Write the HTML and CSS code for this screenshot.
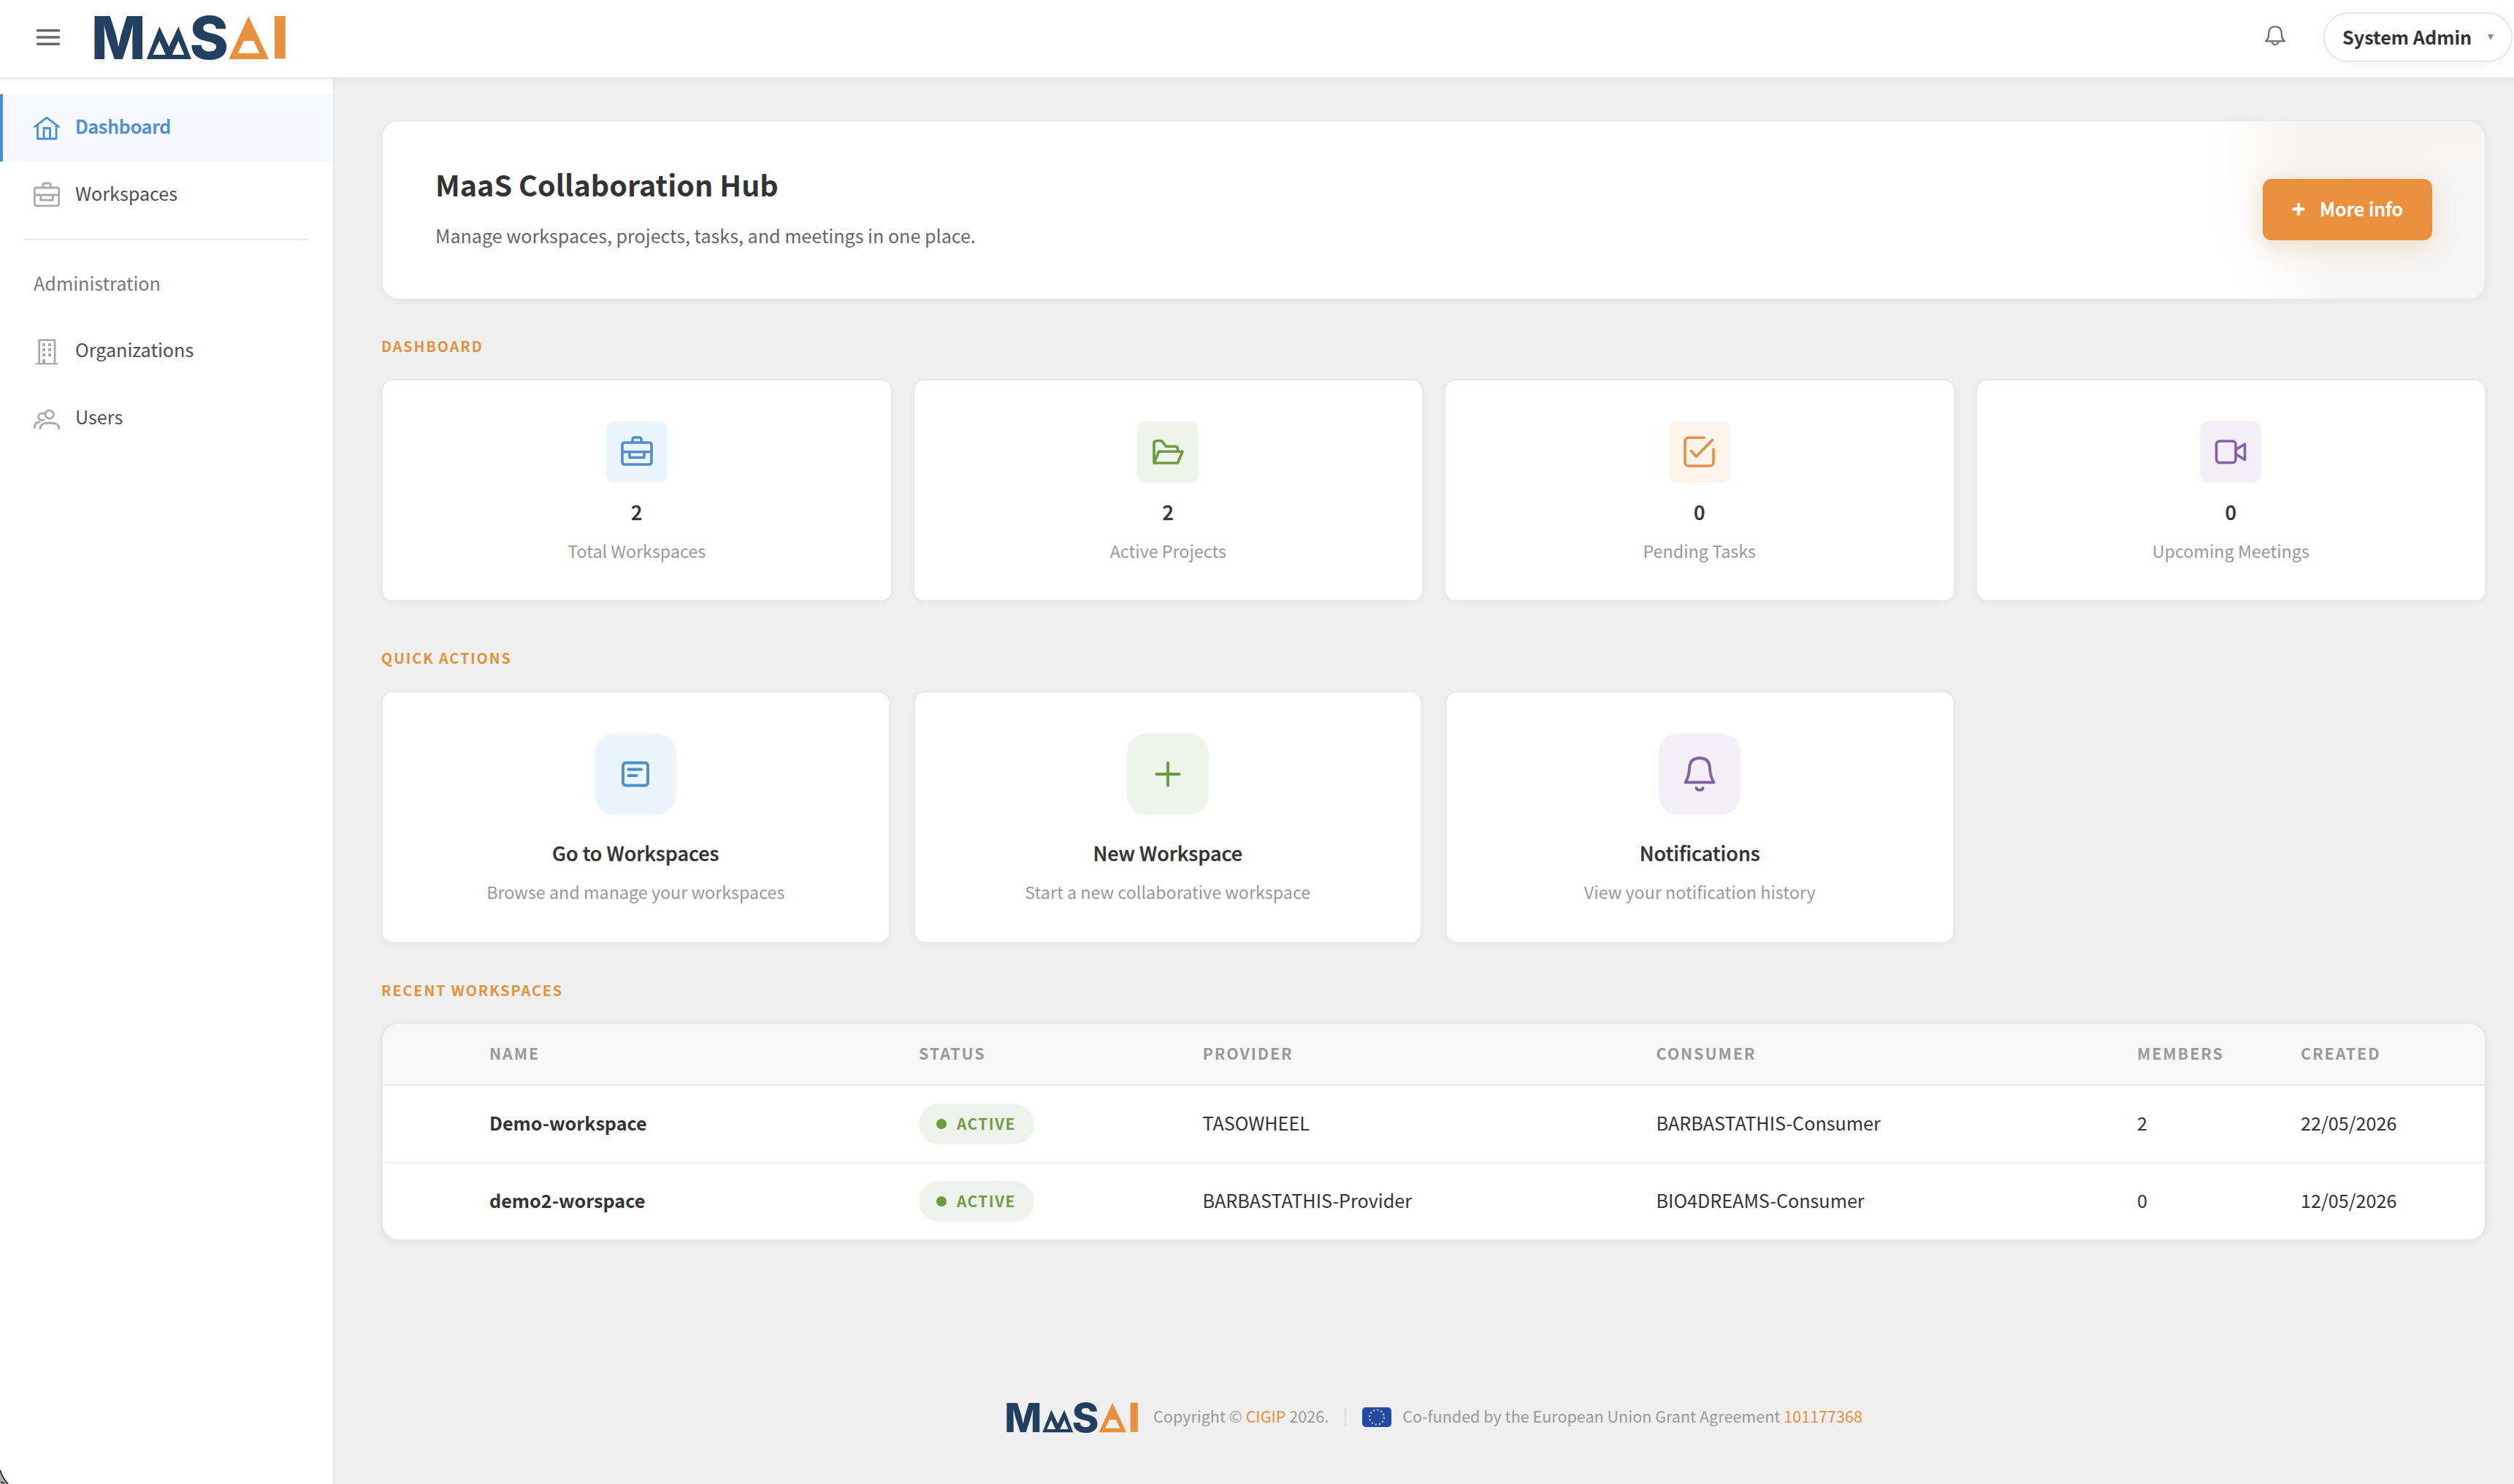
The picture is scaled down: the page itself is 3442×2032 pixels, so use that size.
FILE: index.html
```html
<!DOCTYPE html>
<html lang="en">
<head>
<meta charset="utf-8">
<title>MaaSAI – Collaboration Hub</title>
<link rel="stylesheet" href="styles.css">
</head>
<body>
<header class="topbar">
  <svg class="burger" width="34" height="24" viewBox="0 0 34 24"><path d="M2.500 2.700h29M2.500 12h29M2.500 21.300h29"/></svg>
  <svg class="logo" width="262" height="60" viewBox="0 0 262 60">
    <text class="logo-letter" x="-4" y="60" textLength="74.500" lengthAdjust="spacingAndGlyphs">M</text>
    <path fill="#233f60" fill-rule="evenodd" d="M71.700 60 89.300 15.300 102.300 43 115.300 15.300 133 60ZM80.300 54H97.700L89.300 35ZM106.700 54H123.300L115.300 35Z"/>
    <text class="logo-letter" x="130.600" y="60">S</text>
    <path fill="#e8903e" fill-rule="evenodd" d="M184.300 60 211.300 1 239 60ZM205 35H218.300L226.300 52H196.700Z"/>
    <rect fill="#e8903e" x="247" y="1" width="14.800" height="58.400"/>
  </svg>
  <svg class="bell" width="28" height="28" viewBox="0 0 28 28"><path d="M1 21.300C4.500 19 5 16 5.200 10.500 5.300 4 9 1.300 14 1.300S22.700 4 22.800 10.500C23 16 23.500 19 27 21.300ZM9.500 21.500a4.500 4.500 0 0 0 9 0"/></svg>
  <button class="user"><span>System Admin</span><i class="caret"></i></button>
</header>

<div class="body">
  <nav class="sidebar">
    <a class="item active">
      <svg width="36" height="36" viewBox="0 0 36 36"><path d="M1.500 16.500 18 4.200 34.500 16.500M5.500 14V33H31V14M14 33V18.500H22.500V33"/></svg>
      <span>Dashboard</span>
    </a>
    <a class="item">
      <svg width="36" height="36" viewBox="0 0 36 36"><rect x="1.300" y="8" width="33.400" height="24.800" rx="2.500"/><path d="M12.800 8V4.500a2.500 2.500 0 0 1 2.500-2.500h5.600a2.500 2.500 0 0 1 2.500 2.500V8M1.300 18H34.700M9.700 18v7H26.300V18"/></svg>
      <span>Workspaces</span>
    </a>
    <hr>
    <div class="group">Administration</div>
    <a class="item">
      <svg width="36" height="36" viewBox="0 0 36 36"><path d="M7.700 35V2.600H29V35M4 35.400H32"/><path class="solid" d="M12 7h4v4h-4zM20 7h4v4h-4zM12 14h4v4h-4zM20 14h4v4h-4zM12 21h4v4h-4zM20 21h4v4h-4zM12 29h4v6h-4z"/></svg>
      <span>Organizations</span>
    </a>
    <a class="item">
      <svg width="36" height="36" viewBox="0 0 36 36"><circle cx="21.700" cy="12.500" r="5.700"/><path d="M9.200 32C9.200 26 13 24 21.700 24S34.700 26 34.700 32M13.800 11C8.500 10.300 6.500 13.500 6.500 15.700 6.500 19 10 21.500 13.800 20M1.300 30.800C1.300 26 3 23 8 23"/></svg>
      <span>Users</span>
    </a>
  </nav>

  <main>
    <section class="hero">
      <div class="hero-text">
        <h1>MaaS Collaboration Hub</h1>
        <p>Manage workspaces, projects, tasks, and meetings in one place.</p>
      </div>
      <button class="cta"><b>+</b><span>More info</span></button>
    </section>

    <h2>Dashboard</h2>
    <div class="stats">
      <article class="card">
        <div class="tile blue"><svg width="44" height="44" viewBox="0 0 44 44"><rect x="2" y="9" width="40" height="30" rx="3"/><path d="M16 9V4.500A2.500 2.500 0 0 1 18.500 2h7A2.500 2.500 0 0 1 28 4.500V9M2 21.700H42M12 21.700V29.500H32V21.700"/></svg></div>
        <strong>2</strong><p>Total Workspaces</p>
      </article>
      <article class="card">
        <div class="tile green"><svg width="44" height="44" viewBox="0 0 44 44"><path d="M3 37V10.500Q3 6.500 7 6.500H11Q13.500 6.500 15 8.300L19.500 14.300H32Q35.500 14.300 35.500 17.500V21M3 37 9.500 21.300H42L35.500 37Z"/></svg></div>
        <strong>2</strong><p>Active Projects</p>
      </article>
      <article class="card">
        <div class="tile orange"><svg width="44" height="44" viewBox="0 0 44 44"><path d="M28 2.200H7a5 5 0 0 0-5 5V36a5 5 0 0 0 5 5H36a5 5 0 0 0 5-5V18M10.500 20.500 17.500 28 39.500 5.500"/></svg></div>
        <strong>0</strong><p>Pending Tasks</p>
      </article>
      <article class="card">
        <div class="tile purple"><svg width="44" height="44" viewBox="0 0 44 44"><rect x="2.500" y="7" width="26.500" height="29.500" rx="4.500"/><path d="M29.500 18.500 41.500 11V32.500L29.500 25"/></svg></div>
        <strong>0</strong><p>Upcoming Meetings</p>
      </article>
    </div>

    <h2 class="h-quick">Quick Actions</h2>
    <div class="actions">
      <article class="card">
        <div class="tile blue"><svg width="48" height="48" viewBox="0 0 48 48"><rect x="7" y="8.500" width="34" height="31" rx="4"/><path d="M14.500 17.500H32M14.500 26H25.500"/></svg></div>
        <h3>Go to Workspaces</h3><p>Browse and manage your workspaces</p>
      </article>
      <article class="card">
        <div class="tile green"><svg width="48" height="48" viewBox="0 0 48 48"><path d="M24 8.500V39.500M8.500 24H39.500"/></svg></div>
        <h3>New Workspace</h3><p>Start a new collaborative workspace</p>
      </article>
      <article class="card">
        <div class="tile purple"><svg width="48" height="48" viewBox="0 0 48 48"><path d="M4.500 35.300C8.500 29 9.900 22 10.200 14.500 10.900 6 16 2 24 2S37.100 6 37.800 14.500C38.100 22 39.500 29 43.500 35.300ZM19.500 43C20.500 46.800 27.500 46.800 28.500 43"/></svg></div>
        <h3>Notifications</h3><p>View your notification history</p>
      </article>
    </div>

    <h2 class="h-recent">Recent Workspaces</h2>
    <div class="table-card">
      <table>
        <colgroup><col class="c0"><col class="c1"><col class="c2"><col class="c3"><col class="c4"><col class="c5"><col></colgroup>
        <thead>
          <tr><th></th><th>Name</th><th class="th-status">Status</th><th>Provider</th><th>Consumer</th><th>Members</th><th>Created</th></tr>
        </thead>
        <tbody>
          <tr><td></td><td class="name">Demo-workspace</td><td><span class="badge"><i></i>Active</span></td><td>TASOWHEEL</td><td>BARBASTATHIS-Consumer</td><td>2</td><td>22/05/2026</td></tr>
          <tr><td></td><td class="name">demo2-worspace</td><td><span class="badge"><i></i>Active</span></td><td>BARBASTATHIS-Provider</td><td>BIO4DREAMS-Consumer</td><td>0</td><td>12/05/2026</td></tr>
        </tbody>
      </table>
    </div>

    <footer>
      <svg class="foot-logo" width="180" height="41.200" viewBox="0 0 262 60">
        <text class="logo-letter" x="-4" y="60" textLength="74.500" lengthAdjust="spacingAndGlyphs">M</text>
        <path fill="#233f60" fill-rule="evenodd" d="M71.700 60 89.300 15.300 102.300 43 115.300 15.300 133 60ZM80.300 54H97.700L89.300 35ZM106.700 54H123.300L115.300 35Z"/>
        <text class="logo-letter" x="130.600" y="60">S</text>
        <path fill="#e8903e" fill-rule="evenodd" d="M184.300 60 211.300 1 239 60ZM205 35H218.300L226.300 52H196.700Z"/>
        <rect fill="#e8903e" x="247" y="1" width="14.800" height="58.400"/>
      </svg>
      <span class="copy">Copyright © <a>CIGIP</a> 2026.</span>
      <i class="sep"></i>
      <svg class="flag" width="40" height="27" viewBox="0 0 40 27"><rect width="40" height="27" rx="5" fill="#2049a8"/><circle cx="20" cy="13.500" r="10" fill="none" stroke="#e6d25a" stroke-width="2.200" stroke-dasharray="2.200 3.036"/></svg>
      <span>Co-funded by the European Union Grant Agreement <a>101177368</a></span>
    </footer>
  </main>
</div>
<svg class="corner" width="12" height="20" viewBox="0 0 12 20"><path d="M0 2Q3 12 11 20H0Z" fill="#b4b4b4"/><path d="M0 1Q3 11 11 20M1 17l5 2" fill="none" stroke="#222" stroke-width="1.800"/></svg>
</body>
</html>
```
FILE: styles.css
```css
* { box-sizing: border-box; }
body {
  margin: 0;
  height: 2032px;
  background: #efefef;
  color: #333;
  font: 400 25.16px/36px "Noto Sans CJK SC", "Noto Sans", sans-serif;
}
h1, h2, h3, p { margin: 0; }
svg { display: block; flex: none; fill: none; }
.logo-letter { font: 800 81px Inter, sans-serif; fill: #233f60; }

.topbar {
  position: relative;
  z-index: 1;
  display: flex;
  align-items: center;
  height: 108px;
  padding: 0 2px 4px 49px;
  background: #fff;
  border-bottom: 2px solid #e8e8e8;
  box-shadow: 0 2px 12px rgba(0, 0, 0, .05);
}
.burger { stroke: #666; stroke-width: 3.4; stroke-linecap: round; }
.logo { margin-left: 46px; overflow: visible; }
.bell { margin: 0 52px 5px auto; stroke: #6c6c72; stroke-width: 2.2; stroke-linejoin: round; }
.user {
  display: flex;
  align-items: center;
  width: 259px;
  height: 68px;
  padding: 0 0 3px 24px;
  border: 2px solid #e6e6e6;
  border-radius: 34px;
  background: #fff;
  box-shadow: 0 4px 16px rgba(0, 0, 0, .05);
  color: #333;
  font: 700 25.2px/36px "Noto Sans CJK SC", sans-serif;
}
.caret {
  margin: 3px 0 0 22px;
  border: 4px solid transparent;
  border-top: 8px solid #8c8c8c;
  border-bottom: 0;
}

.body { display: flex; height: 1924px; }
.sidebar {
  flex: none;
  width: 458px;
  padding-top: 21px;
  background: #fff;
  border-right: 2px solid #e6e6e6;
}
.item {
  display: flex;
  align-items: center;
  gap: 20px;
  height: 92px;
  padding-left: 46px;
  color: #4d4f53;
}
.item span { padding: 0 0 6px 1px; }
.item svg { stroke: #a9aaae; stroke-width: 2.8; stroke-linecap: round; stroke-linejoin: round; }
.item .solid { fill: #a9aaae; stroke: none; }
.item.active {
  padding-left: 42px;
  border-left: 4px solid #4a8fd4;
  background: #f5f9ff;
  color: #4f8ecb;
  font-weight: 500;
  font-size: 25.2px;
  -webkit-text-stroke: .5px #4f8ecb;
}
.item.active svg { stroke: #4f8fd0; }
.sidebar hr {
  width: 388px;
  height: 2px;
  margin: 14px 0 14px 33px;
  border: 0;
  background: #e6e6e6;
}
.group { height: 92px; padding-left: 46px; line-height: 88px; color: #75777a; }

main { flex: 1; padding: 56px 38px 0 64px; }
.hero {
  display: flex;
  align-items: center;
  justify-content: space-between;
  height: 247px;
  padding: 0 72px;
  border: 2px solid #e8e8e8;
  border-radius: 24px;
  background:
    radial-gradient(circle at 2860px 50px, rgba(255, 255, 255, 0) 240px, #fff 365px),
    linear-gradient(172deg, #f9f4ef 25%, #f5f5f5 78%);
  box-shadow: 0 2px 10px rgba(0, 0, 0, .05);
}
.hero-text { padding-bottom: 10px; }
h1 { font-size: 39.500px; line-height: 56px; font-weight: 700; }
.hero p { margin-top: 22px; line-height: 40px; color: #666; font-size: 25.1px; }
.cta {
  display: flex;
  align-items: center;
  width: 232px;
  height: 84px;
  margin-bottom: 2px;
  padding: 0 0 4px 40px;
  border: 0;
  border-radius: 12px;
  background: #e8903e;
  box-shadow: 0 8px 32px rgba(232, 144, 62, .26);
  color: #fff;
  font: 500 25.400px/36px "Noto Sans CJK SC", sans-serif;
  -webkit-text-stroke: .5px #fff;
}
.cta b { width: 38px; text-align: left; font-weight: 700; font-size: 31px; }

h2 {
  margin: 48px 0 30px;
  color: #e0923f;
  font-size: 19.800px;
  line-height: 30px;
  font-weight: 700;
  letter-spacing: 1.900px;
  text-transform: uppercase;
}
.h-quick { margin-top: 62px; }
.h-recent { margin: 49px 0 29px; }
.card {
  display: flex;
  flex-direction: column;
  align-items: center;
  padding-top: 56px;
  border: 2px solid #e8e8e8;
  border-radius: 16px;
  background: #fff;
  box-shadow: 0 2px 8px rgba(0, 0, 0, .04);
}
.card p { color: #999; font-size: 23.300px; line-height: 34px; }
.tile { display: flex; align-items: center; justify-content: center; stroke-linecap: round; stroke-linejoin: round; }
.stats { display: grid; grid-template-columns: repeat(4, 1fr); gap: 28px; }
.stats .card { height: 305px; }
.stats .tile { width: 84px; height: 84px; border-radius: 12px; stroke-width: 3.600; }
.stats strong { margin: 22px 0 18px; font-size: 27px; font-weight: 500; -webkit-text-stroke: .4px #333; }
.actions { display: grid; grid-template-columns: repeat(4, 1fr); gap: 32px; }
.actions .card { height: 346px; }
.actions .tile { width: 112px; height: 112px; border-radius: 28px; stroke-width: 3.900; }
h3 { margin: 32px 0 16px; font-size: 27px; line-height: 40px; font-weight: 500; -webkit-text-stroke: .4px #333; }
.blue { background: #ecf4fc; stroke: #4f8dcc; }
.green { background: #eef4ea; stroke: #6a9c3e; }
.orange { background: #fdf3ea; stroke: #e0924a; }
.purple { background: #f2eff7; stroke: #8560a5; }

.table-card {
  height: 299px;
  overflow: hidden;
  border: 2px solid #e6e6e6;
  border-radius: 24px;
  background: #fff;
  box-shadow: 0 2px 10px rgba(0, 0, 0, .06);
}
table { width: 100%; border-collapse: separate; border-spacing: 0; table-layout: fixed; }
.c0 { width: 146px; }
.c1 { width: 588px; }
.c2 { width: 388.500px; }
.c3 { width: 621px; }
.c4 { width: 658.500px; }
.c5 { width: 224px; }
th {
  height: 85px;
  padding: 0 0 4px;
  border-bottom: 2px solid #e6e6e6;
  background: #f8f8f8;
  color: #999;
  font-size: 21.500px;
  font-weight: 700;
  letter-spacing: 1.900px;
  text-align: left;
  text-transform: uppercase;
}
td { height: 106px; padding: 0 0 4px; }
tr:first-child td { border-bottom: 2px solid #f0f0f0; }
tr:last-child td { height: 104px; }
.name { font-weight: 700; }
.badge {
  display: inline-flex;
  align-items: center;
  width: 158px;
  height: 56px;
  margin-top: 4px;
  padding: 0 0 3px 24px;
  border-radius: 28px;
  background: #edf3ea;
  color: #70994a;
  font-size: 20.600px;
  font-weight: 700;
  letter-spacing: 1.600px;
  text-transform: uppercase;
  vertical-align: middle;
}
.badge i { width: 14px; height: 14px; margin: 3px 14px 0 0; border-radius: 50%; background: #689f38; }

footer {
  display: flex;
  align-items: center;
  justify-content: center;
  margin-top: 221px;
  padding-left: 2px;
  color: #999;
  font-size: 21.550px;
}
.foot-logo { overflow: visible; }
footer span { padding-bottom: 4px; white-space: nowrap; }
footer a { color: #e8903e; }
.copy { margin-left: 21px; }
.sep { width: 2px; height: 24px; margin: 0 22px; background: #dcdcdc; }
.flag { margin-right: 15px; }
.corner { position: absolute; left: 0; bottom: 0; z-index: 2; }
```
